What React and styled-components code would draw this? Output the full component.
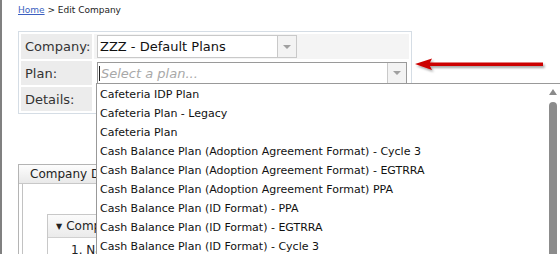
import React from "react";
import styled, {createGlobalStyle} from "styled-components";

const Global = createGlobalStyle`
	html, body {
		margin: 0;
		padding: 0;
		background: #fff;
		overflow: hidden;
	}
	body {
		font-family: "DejaVu Sans", Verdana, sans-serif;
		color: #222;
	}
`

const Page = styled.div`
	position: relative;
	height: 254px;
	border-left: 2px solid #808080;
	padding: 4px 0 0 16px;
	box-sizing: border-box;
	overflow: hidden;
`
const Crumbs = styled.div`
	font-size: 9px;
	line-height: 12px;
	color: #222;
	a {
		color: #3b5fc0;
		text-decoration: underline;
	}
`
const FormArea = styled.div`
	position: relative;
	margin-top: 15px;
`
const Panel = styled.div`
	width: 392px;
	border: 1px solid #d5dde5;
`
const Table = styled.table`
	width: 100%;
	border-spacing: 2px;
`
const Row = styled.tr`
	height: ${p => p.$h}px;
	background: ${p => p.$shade ? "#f4f4f4" : "#fff"};
`
const Label = styled.td`
	width: 67px;
	padding: 0 0 0 4px;
	background: #ececec;
	font-size: 13px;
	color: #333;
	vertical-align: middle;
`
const Value = styled.td`
	padding: 0 0 0 3px;
	vertical-align: middle;
`
const Select = styled.div`
	position: relative;
	display: flex;
	width: ${p => p.$w}px;
	height: ${p => p.$h}px;
	box-sizing: border-box;
	border: 1px solid ${p => p.$focus ? "#9a9a9a" : "#c9c9c9"};
	background: #fff;
`
const SelectText = styled.div`
	flex: 1;
	display: flex;
	align-items: center;
	padding-left: 2px;
	font-size: 13px;
	color: #111;
	white-space: nowrap;
	overflow: hidden;
`
const Placeholder = styled.span`
	font-style: italic;
	color: #a8a8a8;
	font-size: 13px;
	border-left: 1px solid #222;
	padding-left: 1px;
	margin-left: -1px;
`
const Button = styled.div`
	width: 18px;
	border-left: 1px solid #c9c9c9;
	background: #f3f3f3;
	display: flex;
	align-items: center;
	justify-content: center;
	&::after {
		content: "";
		border-left: 4px solid transparent;
		border-right: 4px solid transparent;
		border-top: 4px solid #a0a0a0;
	}
`
const Dropdown = styled.div`
	position: absolute;
	top: 100%;
	left: -2px;
	width: 472px;
	height: 190px;
	display: flex;
	border: 1px solid #999;
	background: #fff;
	z-index: 5;
`
const List = styled.ul`
	flex: 1;
	list-style: none;
	margin: 0;
	padding: 1px 0 0 0;
`
const Item = styled.li`
	height: 19px;
	line-height: 19px;
	padding-left: 3px;
	font-size: 11px;
	color: #111;
	white-space: nowrap;
`
const Scroll = styled.div`
	width: 8px;
	margin: 5px 12px 0 0;
	display: flex;
	flex-direction: column;
	align-items: center;
	&::before {
		content: "";
		border-left: 4px solid transparent;
		border-right: 4px solid transparent;
		border-bottom: 6px solid #8a8a8a;
	}
`
const Thumb = styled.div`
	margin-top: 7px;
	width: 8px;
	flex: 1;
	background: #8c8c8c;
	border-radius: 4px 4px 0 0;
`
const Pointer = styled.svg`
	position: absolute;
	left: 395px;
	top: 24px;
`
const Tabs = styled.div`
	margin-top: 50px;
	width: 500px;
	height: 120px;
	border: 1px solid #b4b4b4;
`
const TabHead = styled.div`
	height: 18px;
	padding-left: 11px;
	font-size: 12px;
	line-height: 18px;
	color: #222;
	background: linear-gradient(#fdfdfd, #e9e9e9);
	border-bottom: 1px solid #c8c8c8;
`
const TabBody = styled.div`
	margin: 0 3px;
	height: 100px;
	border: 1px solid #c2c2c2;
	border-top: none;
	padding: 30px 0 0 24px;
`
const Section = styled.div`
	width: 400px;
	border: 1px solid #c8c8c8;
`
const SectionHead = styled.div`
	height: 22px;
	padding-left: 8px;
	font-size: 12px;
	line-height: 22px;
	background: linear-gradient(#fbfbfb, #ebebeb);
	border-bottom: 1px solid #d0d0d0;
	&::before {
		content: "▼";
		font-size: 8px;
		margin-right: 4px;
		vertical-align: 1px;
	}
`
const SectionRow = styled.div`
	padding: 5px 0 0 23px;
	font-size: 12px;
`

const plans = [
	"Cafeteria IDP Plan",
	"Cafeteria Plan - Legacy",
	"Cafeteria Plan",
	"Cash Balance Plan (Adoption Agreement Format) - Cycle 3",
	"Cash Balance Plan (Adoption Agreement Format) - EGTRRA",
	"Cash Balance Plan (Adoption Agreement Format) PPA",
	"Cash Balance Plan (ID Format) - PPA",
	"Cash Balance Plan (ID Format) - EGTRRA",
	"Cash Balance Plan (ID Format) - Cycle 3",
	"Cash Balance Plan (ID Format)",
];

const App = () => {
	return (
		<Page>
			<Global/>
			<Crumbs><a href="#">Home</a> &gt; Edit Company</Crumbs>
			<FormArea>
				<Panel>
					<Table>
						<tbody>
							<Row $h={25} $shade>
								<Label>Company:</Label>
								<Value>
									<Select $w={200} $h={23}>
										<SelectText>ZZZ - Default Plans</SelectText>
										<Button/>
									</Select>
								</Value>
							</Row>
							<Row $h={24}>
								<Label>Plan:</Label>
								<Value>
									<Select $w={310} $h={22} $focus>
										<SelectText><Placeholder>Select a plan...</Placeholder></SelectText>
										<Button/>
										<Dropdown>
											<List>
												{plans.map(p => <Item key={p}>{p}</Item>)}
											</List>
											<Scroll><Thumb/></Scroll>
										</Dropdown>
									</Select>
								</Value>
							</Row>
							<Row $h={24}>
								<Label>Details:</Label>
								<Value/>
							</Row>
						</tbody>
					</Table>
				</Panel>
				<Pointer width="140" height="20" viewBox="0 0 140 20">
					<defs>
						<filter id="sh" x="-10%" y="-50%" width="120%" height="200%">
							<feDropShadow dx="1.5" dy="2" stdDeviation="1.2" floodColor="#000" floodOpacity="0.35"/>
						</filter>
					</defs>
					<g filter="url(#sh)">
						<polygon points="2,9 19,3.5 17,7.5 130,7.5 130,11 17,11 19,15" fill="#cc0000"/>
					</g>
				</Pointer>
			</FormArea>
			<Tabs>
				<TabHead>Company Data</TabHead>
				<TabBody>
					<Section>
						<SectionHead>Company Information</SectionHead>
						<SectionRow>1. Name</SectionRow>
					</Section>
				</TabBody>
			</Tabs>
		</Page>
	);
}

export default App;
